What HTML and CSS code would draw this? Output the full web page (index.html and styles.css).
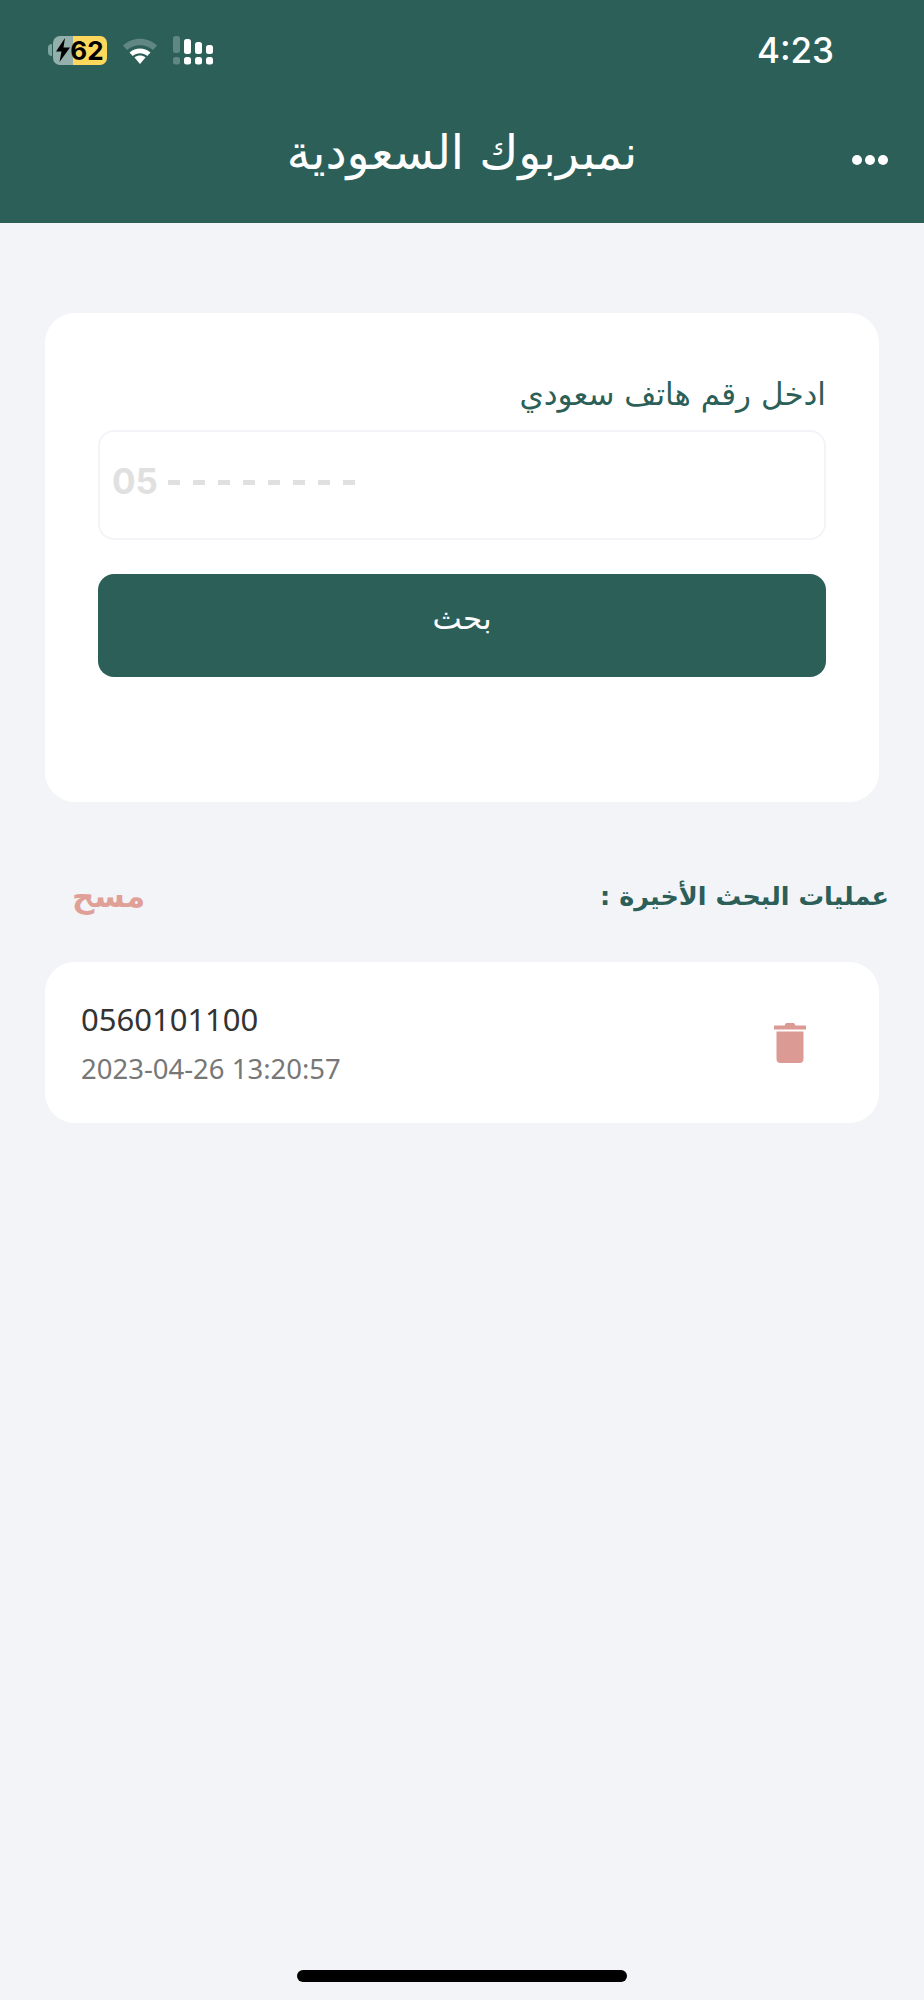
FILE: index.html
```html
<!DOCTYPE html>
<html lang="ar" dir="rtl">
<head>
  <meta charset="UTF-8">
  <meta name="viewport" content="width=device-width, initial-scale=1.0">
  <title>نمبربوك السعودية</title>
  <link rel="stylesheet" href="styles.css">
</head>
<body>

<header class="app-header">
  <div class="status-bar">
    <span class="time" dir="ltr">4:23</span>
    <div class="status-icons" dir="ltr">
      <div class="battery">
        <span class="battery-tip"></span>
        <div class="battery-body">
          <svg class="bolt" width="14" height="24" viewBox="0 0 14 24"><path d="M9 0 0 13.500H5.500L3.500 24 14 9.500H7.500Z" fill="#000"/></svg>
          <span class="battery-level">62</span>
        </div>
      </div>
      <svg class="wifi" width="36" height="27" viewBox="0 0 36 27">
        <path d="M1 8.500C10.500 -0.500 25.500 -0.500 35 8.500L31 13C24 6.500 12 6.500 5 13Z" fill="#fff" fill-opacity="0.25"/>
        <path d="M7.500 15.500C13.500 10.300 22.500 10.300 28.500 15.500L25.300 19C21 15.300 15 15.300 10.700 19Z" fill="#fff"/>
        <path d="M12.500 20.500C15.800 17.900 20.200 17.900 23.500 20.500L18 27Z" fill="#fff"/>
      </svg>
      <svg class="signal" width="40" height="29" viewBox="0 0 40 29">
        <rect x="0" y="0" width="7" height="17" rx="2.500" fill="#fff" fill-opacity="0.25"/>
        <rect x="0" y="21" width="7" height="7.500" rx="2.500" fill="#fff" fill-opacity="0.25"/>
        <rect x="11" y="3" width="7" height="15" rx="2.500" fill="#fff"/>
        <rect x="11" y="21" width="7" height="7.500" rx="2.500" fill="#fff"/>
        <rect x="22" y="6" width="7" height="12" rx="2.500" fill="#fff"/>
        <rect x="22" y="21" width="7" height="7.500" rx="2.500" fill="#fff"/>
        <rect x="33" y="9" width="7" height="9" rx="2.500" fill="#fff"/>
        <rect x="33" y="21" width="7" height="7.500" rx="2.500" fill="#fff"/>
      </svg>
    </div>
  </div>
  <div class="title-bar">
    <h1 class="title">نمبربوك السعودية</h1>
    <div class="more"><span></span><span></span><span></span></div>
  </div>
</header>

<main class="content">
  <section class="search-card">
    <label class="field-label" for="phone">ادخل رقم هاتف سعودي</label>
    <div class="phone-input" dir="ltr" id="phone">
      <span class="prefix">05</span>
      <span class="dashes"><i></i><i></i><i></i><i></i><i></i><i></i><i></i><i></i></span>
    </div>
    <button class="search-button">بحث</button>
  </section>

  <div class="recent-head">
    <h2 class="recent-title">عمليات البحث الأخيرة :</h2>
    <a class="clear-link">مسح</a>
  </div>

  <section class="recent-item">
    <svg class="trash" width="32" height="41" viewBox="0 0 32 41">
      <path d="M0 3.500H10.500L12 1H20L21.500 3.500H32V7.500H0Z" fill="#dc9a94"/>
      <path d="M2.500 9.500H29.500V37C29.500 39.500 28 41 25.500 41H6.500C4 41 2.500 39.500 2.500 37Z" fill="#dc9a94"/>
    </svg>
    <div class="recent-text" dir="ltr">
      <div class="number">0560101100</div>
      <div class="date">2023-04-26 13:20:57</div>
    </div>
  </section>
</main>

<div class="home-bar"></div>

</body>
</html>
```

FILE: styles.css
```css
body {
  margin: 0;
  height: 2000px;
  display: flex;
  flex-direction: column;
  background: #f2f4f8;
  font-family: "DejaVu Sans", "Noto Sans", sans-serif;
}

.app-header {
  height: 223px;
  padding: 0 36px;
  box-sizing: border-box;
  background: #2c5f58;
  color: white;
}

.status-bar {
  height: 100px;
  display: flex;
  align-items: center;
  justify-content: space-between;
  padding: 0 54px 0 12px;
}

.time {
  font-family: "Inter", sans-serif;
  font-size: 35px;
  font-weight: 500;
}

.status-icons {
  display: flex;
  align-items: center;
  gap: 15px;
}

.battery {
  display: flex;
  align-items: center;
  gap: 1px;
}

.battery-tip {
  width: 4px;
  height: 12px;
  background: #7fa39e;
  border-radius: 4px 0 0 4px;
}

.battery-body {
  width: 54px;
  height: 29px;
  display: flex;
  align-items: center;
  justify-content: center;
  border-radius: 7px;
  background: linear-gradient(to right, #93b0ac 37%, #fdd85d 37%);
}

.battery-level {
  font-family: "Inter", sans-serif;
  font-size: 26px;
  font-weight: 700;
  color: #000;
}

.title-bar {
  height: 100px;
  padding-top: 4px;
  box-sizing: border-box;
  display: flex;
  align-items: center;
  justify-content: center;
  position: relative;
}

.title {
  margin: 0;
  font-size: 47.500px;
  font-weight: 400;
}

.more {
  position: absolute;
  right: 0;
  top: 55px;
  display: flex;
  gap: 3px;
}

.more span {
  width: 10px;
  height: 10px;
  border-radius: 50%;
  background: white;
}

.content {
  flex: 1;
  padding: 90px 45px 0;
}

.search-card {
  height: 489px;
  padding: 61px 53px 0;
  box-sizing: border-box;
  display: flex;
  flex-direction: column;
  background: white;
  border-radius: 30px;
}

.field-label {
  height: 56px;
  color: #2c5f58;
  font-size: 31px;
  line-height: 40px;
}

.phone-input {
  height: 110px;
  padding: 0 12px 8px;
  box-sizing: border-box;
  display: flex;
  align-items: center;
  gap: 10px;
  border: 2px solid #f2f4f8;
  border-radius: 16px;
}

.prefix {
  font-family: "Inter", sans-serif;
  font-size: 35px;
  font-weight: 700;
  color: #e0e0e0;
}

.dashes {
  display: flex;
  gap: 13px;
  margin-top: 3px;
}

.dashes i {
  width: 12px;
  height: 5px;
  background: #e0e0e0;
}

.search-button {
  height: 103px;
  margin-top: 34px;
  padding: 0 0 16px;
  border: none;
  border-radius: 16px;
  background: #2c5f58;
  color: white;
  font-family: inherit;
  font-size: 31px;
}

.recent-head {
  height: 160px;
  padding-top: 28px;
  box-sizing: border-box;
  margin-left: 27px;
  margin-right: -10px;
  display: flex;
  align-items: center;
  justify-content: space-between;
}

.recent-title {
  margin: 0;
  color: #2c5f58;
  font-size: 25.500px;
  font-weight: 700;
}

.clear-link {
  color: #e0a097;
  font-size: 31px;
  font-weight: 700;
}

.recent-item {
  height: 161px;
  padding: 0 73px 0 36px;
  box-sizing: border-box;
  display: flex;
  align-items: center;
  justify-content: space-between;
  background: white;
  border-radius: 30px;
}

.number {
  font-family: "Noto Sans", sans-serif;
  font-size: 31px;
  color: #333;
}

.date {
  margin-top: 10px;
  font-family: "Noto Sans", sans-serif;
  font-size: 27.500px;
  color: #777;
}

.home-bar {
  position: absolute;
  left: 297px;
  top: 1970px;
  width: 330px;
  height: 12px;
  border-radius: 6px;
  background: black;
}
```
